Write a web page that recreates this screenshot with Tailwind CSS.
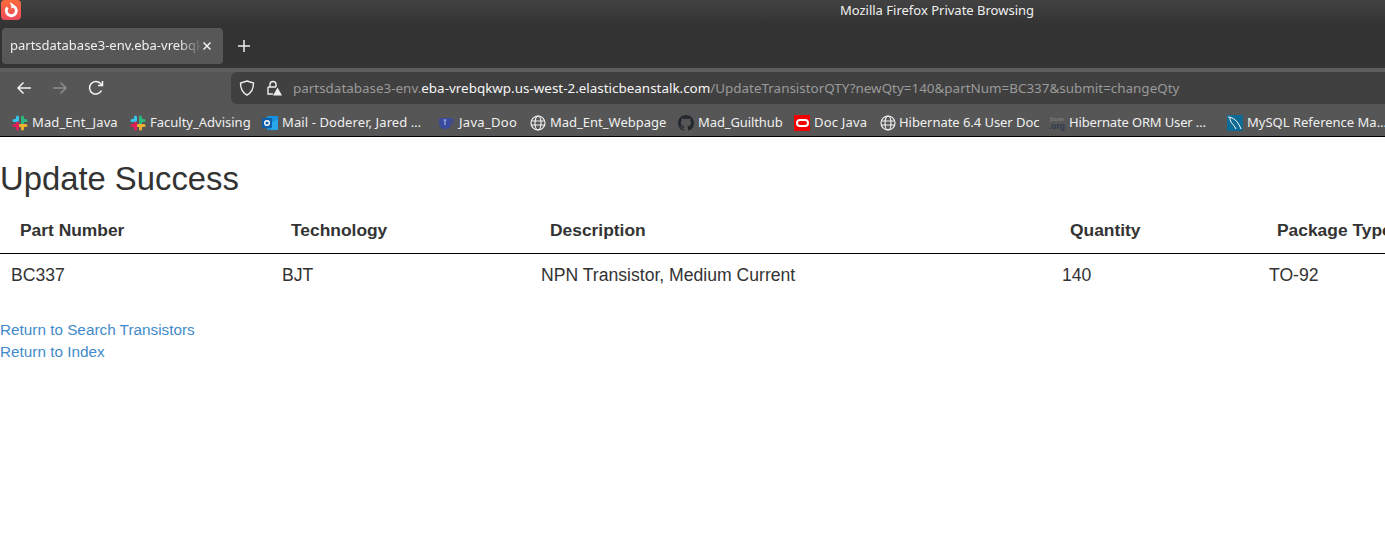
<!doctype html>
<html>
<head>
<meta charset="utf-8">
<script src="https://cdn.jsdelivr.net/npm/@tailwindcss/browser@4"></script>
</head>
<body class="bg-white overflow-hidden h-[533px] font-['Liberation_Sans',sans-serif] text-[#333]">
<div class="flex flex-col font-['Noto_Sans',sans-serif]">
  <div class="h-[24px] relative flex items-start pt-[1px] justify-center bg-gradient-to-b from-[#424242] to-[#343434]">
    <div class="absolute left-[1px] top-0 w-[20px] h-[20px] rounded-[4px] bg-gradient-to-b from-[#ff6a3a] to-[#ee4a58] flex items-center justify-center">
      <svg width="16" height="16" viewBox="0 0 16 16" fill="none"><path d="M11 4.500 A5 5 0 1 1 4.500 5.500" stroke="#fff" stroke-width="2.800"/><path d="M6.500 0.500 C9 1 11 2.500 12.500 5 L8 6.500 C9 4.500 8 2.500 6.500 0.500 Z" fill="#fff"/></svg>
    </div>
    <span class="text-[13px] text-[#f0f0f0] ml-[489px] whitespace-nowrap">Mozilla Firefox Private Browsing</span>
  </div>
  <div class="h-[44px] flex items-start pt-[4px] pl-[2px] bg-[#333333]">
    <div class="w-[221px] h-[36px] rounded-[4px] bg-[#575757] flex items-center pl-[8px] pr-[11px] text-[13px] text-[#f0f0f0]">
      <span class="w-[193px] overflow-hidden whitespace-nowrap [mask-image:linear-gradient(to_right,black_88%,transparent)]">partsdatabase3-env.eba-vrebqkwp</span>
      <svg class="ml-auto shrink-0" width="10" height="10" viewBox="0 0 10 10"><path d="M1.500 1.500 L8.500 8.500 M8.500 1.500 L1.500 8.500" stroke="#f0f0f0" stroke-width="1.500"/></svg>
    </div>
    <svg class="ml-[15px] mt-[12px]" width="12" height="12" viewBox="0 0 12 12"><path d="M6 0 V12 M0 6 H12" stroke="#f0f0f0" stroke-width="1.500"/></svg>
  </div>
  <div class="h-[36px] bg-[#565656] border-t-[4px] border-[#5e5e5e] flex items-center pl-[16px]">
    <svg class="shrink-0" width="16" height="16" viewBox="0 0 16 16" fill="none"><path d="M15 8 H2 M7.500 2.500 L2 8 L7.500 13.500" stroke="#f2f2f2" stroke-width="1.500"/></svg>
    <svg class="ml-[20px] shrink-0" width="16" height="16" viewBox="0 0 16 16" fill="none"><path d="M1 8 H14 M8.500 2.500 L14 8 L8.500 13.500" stroke="#8c8c8c" stroke-width="1.500"/></svg>
    <svg class="ml-[20px] shrink-0" width="16" height="16" viewBox="0 0 16 16" fill="none"><path d="M13.500 10.500 A6.300 6.300 0 1 1 12.500 3.500 L14.500 5.500 M14.500 1 V5.500 H10" stroke="#f2f2f2" stroke-width="1.500"/></svg>
    <div class="ml-[127px] grow h-[32px] bg-[#404040] rounded-l-[6px] flex items-center pl-[8px] text-[13.43px] whitespace-nowrap overflow-hidden">
      <svg class="shrink-0" width="16" height="16" viewBox="0 0 16 16" fill="none"><path d="M8 1 L14.500 3 C14.500 9 12 13 8 15 C4 13 1.500 9 1.500 3 Z" stroke="#ededed" stroke-width="1.400"/></svg>
      <svg class="ml-[11px] shrink-0" width="16" height="16" viewBox="0 0 16 16" fill="none"><path d="M4 7 V4.500 a3 3 0 0 1 6 0 V7 M2 7 H10 M2 7 V14 H7" stroke="#ededed" stroke-width="1.400"/><path d="M11.500 7.500 L16 15.500 H7 Z" fill="#ededed"/></svg>
      <span class="ml-[11px] text-[#9a9a9a]">partsdatabase3-env.</span><span class="text-[#f5f5f5]">eba-vrebqkwp.us-west-2.elasticbeanstalk.com</span><span class="text-[#9a9a9a]">/UpdateTransistorQTY?newQty=140&amp;partNum=BC337&amp;submit=changeQty</span>
    </div>
  </div>
  <div class="h-[33px] bg-[#565656] flex items-center text-[13px] text-[#f0f0f0] whitespace-nowrap overflow-hidden pl-[12px] pt-[6px] border-b border-black">
    <div class="w-[118px] shrink-0 flex items-center gap-[4px]">
      <svg class="shrink-0" width="16" height="16" viewBox="0 0 16 16" fill="none" stroke-width="3" stroke-linecap="round"><path d="M5.500 2 V5" stroke="#36c5f0"/><path d="M2 5.500 H5" stroke="#36c5f0"/><path d="M10.500 2 V8" stroke="#2eb67d"/><path d="M14 5.500 H11" stroke="#2eb67d"/><path d="M10.500 14 V11" stroke="#ecb22e"/><path d="M8 10.500 H14" stroke="#ecb22e"/><path d="M5.500 8 V14" stroke="#e01e5a"/><path d="M2 10.500 H5" stroke="#e01e5a"/></svg>
      <span class="tracking-[0.1px]">Mad_Ent_Java</span>
    </div>
    <div class="w-[132px] shrink-0 flex items-center gap-[4px]">
      <svg class="shrink-0" width="16" height="16" viewBox="0 0 16 16" fill="none" stroke-width="3" stroke-linecap="round"><path d="M5.500 2 V5" stroke="#36c5f0"/><path d="M2 5.500 H5" stroke="#36c5f0"/><path d="M10.500 2 V8" stroke="#2eb67d"/><path d="M14 5.500 H11" stroke="#2eb67d"/><path d="M10.500 14 V11" stroke="#ecb22e"/><path d="M8 10.500 H14" stroke="#ecb22e"/><path d="M5.500 8 V14" stroke="#e01e5a"/><path d="M2 10.500 H5" stroke="#e01e5a"/></svg>
      <span>Faculty_Advising</span>
    </div>
    <div class="w-[176px] shrink-0 flex items-center gap-[4px]">
      <svg class="shrink-0" width="16" height="16" viewBox="0 0 16 16"><rect x="5" y="1" width="11" height="14" rx="1" fill="#1490df"/><path d="M9 8 L16 4 V15 H9 Z" fill="#28a8ea"/><rect x="0" y="3" width="10" height="10" rx="1" fill="#0f5fa8"/><circle cx="5" cy="8" r="2.300" fill="none" stroke="#fff" stroke-width="1.400"/></svg>
      <span class="tracking-[0.1px]">Mail - Doderer, Jared …</span>
    </div>
    <div class="w-[92px] shrink-0 flex items-center gap-[5px]">
      <svg class="shrink-0" width="16" height="16" viewBox="0 0 16 16"><path d="M1 3 H13 V8 C13 12 10 14 7 14 C4 14 1 12 1 8 Z" fill="#3a4a9c"/><path d="M13 4.500 H15.500 V7.500 L12.500 9.500" fill="none" stroke="#3a4a9c" stroke-width="1.300"/><path d="M7 5 V10 M5.500 5 H8.500" stroke="#a3afe6" stroke-width="1.200"/></svg>
      <span class="tracking-[0.3px]">Java_Doo</span>
    </div>
    <div class="w-[148px] shrink-0 flex items-center gap-[4px]">
      <svg class="shrink-0" width="16" height="16" viewBox="0 0 16 16" fill="none" stroke="#f0f0f0" stroke-width="1.200"><circle cx="8" cy="8" r="7"/><ellipse cx="8" cy="8" rx="3" ry="7"/><path d="M1 6 H15 M1 10 H15"/></svg>
      <span>Mad_Ent_Webpage</span>
    </div>
    <div class="w-[116px] shrink-0 flex items-center gap-[4px]">
      <svg class="shrink-0" width="16" height="16" viewBox="0 0 16 16"><path fill="#24292f" d="M8 0C3.580 0 0 3.580 0 8c0 3.540 2.290 6.530 5.470 7.590.4.070.55-.17.55-.38 0-.19-.01-.82-.01-1.490-2.010.37-2.530-.49-2.690-.94-.09-.23-.48-.94-.82-1.130-.28-.15-.68-.52-.01-.53.630-.01 1.080.58 1.230.82.720 1.210 1.870.87 2.330.66.070-.52.280-.87.510-1.070-1.780-.2-3.640-.89-3.640-3.950 0-.87.310-1.590.820-2.150-.08-.2-.36-1.020.08-2.120 0 0 .67-.21 2.200.82.640-.18 1.320-.27 2-.27s1.360.09 2 .27c1.530-1.040 2.200-.82 2.200-.82.440 1.100.16 1.920.08 2.120.51.560.82 1.270.82 2.150 0 3.070-1.870 3.750-3.650 3.950.29.250.54.730.54 1.480 0 1.070-.01 1.930-.01 2.200 0 .21.150.46.550.38A8.010 8.010 0 0 0 16 8c0-4.420-3.580-8-8-8z"/></svg>
      <span class="tracking-[-0.1px]">Mad_Guilthub</span>
    </div>
    <div class="w-[86px] shrink-0 flex items-center gap-[4px]">
      <div class="shrink-0 w-[16px] h-[16px] bg-[#f00000] flex items-center justify-center"><div class="w-[13px] h-[8px] rounded-full border-2 border-white"></div></div>
      <span class="tracking-[0.2px]">Doc Java</span>
    </div>
    <div class="w-[169px] shrink-0 flex items-center gap-[3px]">
      <svg class="shrink-0" width="16" height="16" viewBox="0 0 16 16" fill="none" stroke="#f0f0f0" stroke-width="1.200"><circle cx="8" cy="8" r="7"/><ellipse cx="8" cy="8" rx="3" ry="7"/><path d="M1 6 H15 M1 10 H15"/></svg>
      <span class="tracking-[-0.05px]">Hibernate 6.4 User Doc</span>
    </div>
    <div class="w-[178px] shrink-0 flex items-center gap-[4px]">
      <div class="shrink-0 w-[16px] h-[16px] overflow-hidden flex flex-col items-center justify-center font-['Liberation_Sans',sans-serif]"><span class="text-[6px] leading-[6px] text-[#888]">jboss</span><span class="text-[8.5px] leading-[8px] font-bold text-[#2f3b4c]">.org</span></div>
      <span class="tracking-[-0.15px]">Hibernate ORM User …</span>
    </div>
    <div class="shrink-0 flex items-center gap-[4px]">
      <svg class="shrink-0" width="16" height="16" viewBox="0 0 16 16"><rect width="16" height="16" fill="#0f6a94"/><path d="M1 2 C6 2 11 6 14 14 M3 3 C3 8 6 8 9 14" stroke="#fff" fill="none" stroke-width="1"/></svg>
      <span>MySQL Reference Ma…</span>
    </div>
  </div>
</div>
  <h1 class="text-[32.8px] leading-[36px] mt-[24px] font-normal">Update Success</h1>
  <table class="mt-[13px] w-[1400px] table-fixed text-[17.6px] border-collapse">
    <thead>
      <tr class="border-b border-black h-[43px]">
        <th class="w-[271px] pl-[20px] pb-[2px] text-left font-bold text-[17.4px]">Part Number</th>
        <th class="w-[259px] pl-[20px] pb-[2px] text-left font-bold text-[17.4px]">Technology</th>
        <th class="w-[520px] pl-[20px] pb-[2px] text-left font-bold text-[17.4px]">Description</th>
        <th class="w-[207px] pl-[20px] pb-[2px] text-left font-bold text-[17.4px]">Quantity</th>
        <th class="pl-[20px] pb-[2px] text-left font-bold text-[17.4px] whitespace-nowrap">Package Type</th>
      </tr>
    </thead>
    <tbody>
      <tr class="h-[44px]">
        <td class="pl-[11px]">BC337</td>
        <td class="pl-[11px]">BJT</td>
        <td class="pl-[11px]">NPN Transistor, Medium Current</td>
        <td class="pl-[12px]">140</td>
        <td class="pl-[12px]">TO-92</td>
      </tr>
    </tbody>
  </table>
  <div class="mt-[22px] flex flex-col items-start text-[15.3px] leading-[22px] text-[#428bca]">
    <a href="#">Return to Search Transistors</a>
    <a href="#">Return to Index</a>
  </div>
</body>
</html>
